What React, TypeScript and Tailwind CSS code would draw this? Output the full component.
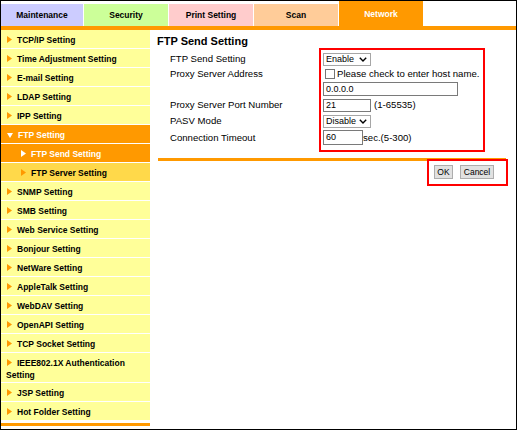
type NavItem = {
  label: string;
  kind?: "open" | "active" | "sub";
};

const navItems: NavItem[] = [
  { label: "TCP/IP Setting" },
  { label: "Time Adjustment Setting" },
  { label: "E-mail Setting" },
  { label: "LDAP Setting" },
  { label: "IPP Setting" },
  { label: "FTP Setting", kind: "open" },
  { label: "FTP Send Setting", kind: "active" },
  { label: "FTP Server Setting", kind: "sub" },
  { label: "SNMP Setting" },
  { label: "SMB Setting" },
  { label: "Web Service Setting" },
  { label: "Bonjour Setting" },
  { label: "NetWare Setting" },
  { label: "AppleTalk Setting" },
  { label: "WebDAV Setting" },
  { label: "OpenAPI Setting" },
  { label: "TCP Socket Setting" },
  { label: "IEEE802.1X Authentication Setting" },
  { label: "JSP Setting" },
  { label: "Hot Folder Setting" },
];

const tabs = [
  { label: "Maintenance", cls: "w-[82px] h-[22px] bg-[#ccccff] text-black" },
  { label: "Security", cls: "w-[84px] h-[22px] bg-[#ccff99] text-black" },
  { label: "Print Setting", cls: "w-[84px] h-[22px] bg-[#ffcccc] text-black" },
  { label: "Scan", cls: "w-[84px] h-[22px] bg-[#ffcc99] text-black" },
  { label: "Network", cls: "w-[84px] h-[25px] bg-[#ff9900] text-white" },
];

function RightArrow({ white }: { white?: boolean }) {
  return (
    <svg width="5" height="7" viewBox="0 0 5 7" className={`inline-block align-baseline ${white ? "fill-white" : "fill-[#ff9900]"}`}>
      <polygon points="0,0 5,3.5 0,7" />
    </svg>
  );
}

function DownArrow() {
  return (
    <svg width="6" height="5" viewBox="0 0 6 5" className="inline-block align-baseline fill-white">
      <polygon points="0,0 6,0 3,5" />
    </svg>
  );
}

function SideItem({ item }: { item: NavItem }) {
  const twoLine = item.label.startsWith("IEEE");
  let box = "bg-[#ffff99] text-black pl-[5px]";
  if (item.kind === "open") box = "bg-[#ff9900] text-white pl-[5px]";
  if (item.kind === "active") box = "bg-[#ff9900] text-white pl-[19px]";
  if (item.kind === "sub") box = "bg-[#ffd94a] text-black pl-[19px]";

  return (
    <div
      className={`${box} border-b border-white pr-[3px] text-[8.5px] font-bold ${
        twoLine ? "leading-[12px] pt-[4px] pb-[1px]" : "h-[19px] pt-[2px] leading-[16px]"
      }`}
    >
      <span className="ml-[1px] mr-[5px]">
        {item.kind === "open" ? <DownArrow /> : <RightArrow white={item.kind === "active"} />}
      </span>
      {item.label}
    </div>
  );
}

function SelectBox({ value }: { value: string }) {
  return (
    <div className="flex h-[13px] w-[48px] items-center justify-between border border-[#a6a6a6] bg-white pl-[2px] pr-[3px] text-[9px] leading-none">
      <span>{value}</span>
      <svg width="8" height="5" viewBox="0 0 8 5" className="stroke-black" fill="none">
        <polyline points="0.8,0.8 4,4 7.2,0.8" strokeWidth="1.4" />
      </svg>
    </div>
  );
}

function TextBox({ value, width, height }: { value: string; width: string; height: string }) {
  return (
    <div className={`${width} ${height} flex items-center border border-[#7a7a7a] bg-white pl-[2px] text-[9px] leading-none`}>
      {value}
    </div>
  );
}

function FormRow({ label, height, children }: { label?: string; height: string; children: React.ReactNode }) {
  return (
    <div className={`flex items-center ${height}`}>
      <div className="w-[153px] shrink-0 text-[9.6px] leading-none">{label}</div>
      <div className="flex items-center">{children}</div>
    </div>
  );
}

export default function App() {
  return (
    <div className="relative h-[430px] w-[517px] overflow-hidden border border-black bg-white font-['Liberation_Sans',Arial,sans-serif] text-black">
      <div className="flex h-[25px] items-end gap-px">
        {tabs.map((t) => (
          <div key={t.label} className={`${t.cls} flex items-center justify-center pt-px text-[8.5px] font-bold`}>
            {t.label}
          </div>
        ))}
      </div>
      <div className="h-[4px] bg-[#ff9900]" />

      <div className="flex">
        <div className="w-[149px] shrink-0">
          {navItems.map((item) => (
            <SideItem key={item.label} item={item} />
          ))}
          <div className="mt-[2px] h-[3px] bg-[#ff9900]" />
        </div>

        <div className="flex flex-1 flex-col">
          <h1 className="ml-[7px] mt-[5px] text-[11px] font-bold leading-[13px]">FTP Send Setting</h1>
          <div className="ml-[20px] mt-[4px] flex flex-col">
            <FormRow label="FTP Send Setting" height="h-[14px]">
              <SelectBox value="Enable" />
            </FormRow>
            <FormRow label="Proxy Server Address" height="h-[15px]">
              <div className="ml-[2px] h-[10px] w-[10px] border border-[#767676] bg-white" />
              <span className="ml-[2px] text-[9.6px] leading-none">Please check to enter host name.</span>
            </FormRow>
            <FormRow height="h-[16px]">
              <TextBox value="0.0.0.0" width="w-[135px]" height="h-[14px]" />
            </FormRow>
            <FormRow label="Proxy Server Port Number" height="h-[16px]">
              <TextBox value="21" width="w-[48px]" height="h-[13px]" />
              <span className="ml-[3px] text-[9.6px] leading-none">(1-65535)</span>
            </FormRow>
            <FormRow label="PASV Mode" height="h-[16px]">
              <SelectBox value="Disable" />
            </FormRow>
            <FormRow label="Connection Timeout" height="h-[17px]">
              <TextBox value="60" width="w-[40px]" height="h-[15px]" />
              <span className="text-[9.6px] leading-none">sec.(5-300)</span>
            </FormRow>
          </div>

          <div className="ml-[8px] mr-[10px] mt-[12px] h-[3px] bg-[#ff9900]" />

          <div className="mr-[22px] mt-[4px] flex justify-end gap-[7px]">
            <button className="h-[14px] w-[19px] border border-[#adadad] bg-[#e1e1e1] text-[8.5px] leading-none">OK</button>
            <button className="h-[14px] w-[34px] border border-[#adadad] bg-[#e1e1e1] text-[8.5px] leading-none">Cancel</button>
          </div>
        </div>
      </div>

      {/* annotation boxes */}
      <div className="absolute left-[318px] top-[47px] h-[104px] w-[166px] border-2 border-[#ff0000]" />
      <div className="absolute left-[426px] top-[158px] h-[27px] w-[81px] border-2 border-[#ff0000]" />
    </div>
  );
}
